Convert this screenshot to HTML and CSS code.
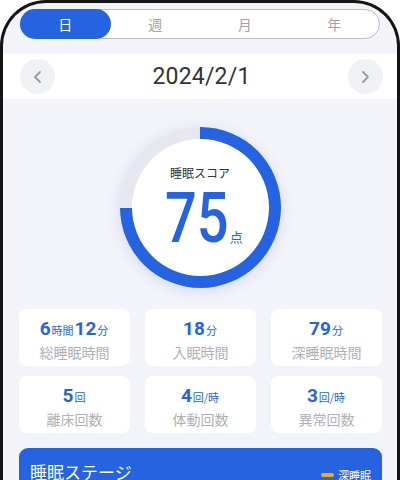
FILE: index.html
```html
<!DOCTYPE html>
<html lang="ja">
<head>
  <meta charset="UTF-8">
  <title>睡眠レポート</title>
  <link rel="stylesheet" href="styles.css">
</head>
<body>
  <div class="phone">
    <div class="tabs">
      <div class="tab active">日</div>
      <div class="tab">週</div>
      <div class="tab">月</div>
      <div class="tab">年</div>
    </div>

    <div class="datebar">
      <div class="nav">
        <svg width="14" height="14" viewBox="0 0 14 14"><polyline points="9,2 4,7 9,12" fill="none" stroke="#9b9ba1" stroke-width="1.8" stroke-linecap="round" stroke-linejoin="round"/></svg>
      </div>
      <div class="date">2024/2/1</div>
      <div class="nav">
        <svg width="14" height="14" viewBox="0 0 14 14"><polyline points="5,2 10,7 5,12" fill="none" stroke="#9b9ba1" stroke-width="1.8" stroke-linecap="round" stroke-linejoin="round"/></svg>
      </div>
    </div>

    <div class="score">
      <div class="ring">
        <div class="ring-inner">
          <div class="score-label">睡眠スコア</div>
          <div class="score-value"><span class="big">75</span><span class="pt">点</span></div>
        </div>
      </div>
    </div>

    <div class="stats">
      <div class="card">
        <div class="val">6<small>時間</small>12<small>分</small></div>
        <div class="lbl">総睡眠時間</div>
      </div>
      <div class="card">
        <div class="val">18<small>分</small></div>
        <div class="lbl">入眠時間</div>
      </div>
      <div class="card">
        <div class="val">79<small>分</small></div>
        <div class="lbl">深睡眠時間</div>
      </div>
      <div class="card">
        <div class="val">5<small>回</small></div>
        <div class="lbl">離床回数</div>
      </div>
      <div class="card">
        <div class="val">4<small>回/時</small></div>
        <div class="lbl">体動回数</div>
      </div>
      <div class="card">
        <div class="val">3<small>回/時</small></div>
        <div class="lbl">異常回数</div>
      </div>
    </div>

    <div class="stage">
      <div class="stage-title">睡眠ステージ</div>
      <div class="legend"><span class="dash"></span>深睡眠</div>
    </div>
  </div>
</body>
</html>
```

FILE: styles.css
```css
* {
  box-sizing: border-box;
}
body {
  margin: 0;
  background: #ffffff;
  font-family: "Noto Sans CJK JP", "Noto Sans", sans-serif;
  color: #333;
}
.phone {
  width: 400px;
  height: 480px;
  border: 3px solid #141414;
  border-bottom: none;
  border-radius: 46px 46px 0 0;
  background: #f3f4f9;
  overflow: hidden;
}
.tabs {
  display: grid;
  grid-template-columns: repeat(4, 1fr);
  margin: 6px 17px 15px;
  height: 30px;
  border: 1px solid #bcbcc2;
  border-radius: 16px;
  background: #fff;
}
.tab {
  display: flex;
  align-items: center;
  justify-content: center;
  font-size: 14px;
  color: #a0a0a6;
}
.tab.active {
  margin: -1px 0 -1px -1px;
  background: #2563e0;
  color: #fff;
  border-radius: 16px;
}
.datebar {
  display: flex;
  align-items: center;
  justify-content: space-between;
  height: 45px;
  padding: 0 14px 0 17px;
  background: #fff;
}
.nav {
  width: 35px;
  height: 35px;
  border-radius: 50%;
  background: #eff1f5;
  display: flex;
  align-items: center;
  justify-content: center;
}
.date {
  font-family: Roboto, "Liberation Sans", sans-serif;
  font-size: 23px;
  color: #333;
  letter-spacing: 0.2px;
}
.score {
  display: flex;
  justify-content: center;
  padding: 28px 0 21px;
}
.ring {
  width: 161px;
  height: 161px;
  padding: 12px;
  border-radius: 50%;
  background: conic-gradient(#2563e0 0 75%, #e6e7f1 75% 100%);
  box-shadow: 0 3px 14px rgba(70, 90, 170, 0.18);
}
.ring-inner {
  width: 100%;
  height: 100%;
  border-radius: 50%;
  background: #fff;
  display: flex;
  flex-direction: column;
  align-items: center;
  padding-top: 26px;
}
.score-label {
  font-size: 12px;
  line-height: 16px;
  color: #333;
}
.score-value {
  margin-top: 2px;
  margin-left: 8px;
  display: flex;
  align-items: baseline;
  color: #2563e0;
  font-family: Roboto, "Liberation Sans", sans-serif;
}
.big {
  display: inline-block;
  font-size: 70px;
  font-weight: 500;
  line-height: 1;
  transform: scaleX(0.8);
  margin: 0 -8px;
}
.pt {
  font-family: "Noto Sans CJK JP", sans-serif;
  font-size: 13px;
  margin-left: 1px;
}
.stats {
  display: grid;
  grid-template-columns: repeat(3, 1fr);
  gap: 10px 15px;
  margin: 0 15px 15px 16px;
}
.card {
  height: 57px;
  background: #fff;
  border-radius: 8px;
  display: flex;
  flex-direction: column;
  align-items: center;
  padding-top: 9px;
}
.val {
  font-family: Roboto, "Liberation Sans", sans-serif;
  font-weight: bold;
  font-size: 19px;
  line-height: 22px;
  color: #2563e0;
}
.val small {
  font-family: "Noto Sans CJK JP", sans-serif;
  font-weight: normal;
  font-size: 11px;
  margin: 0 1px;
}
.lbl {
  margin-top: 2px;
  font-size: 14px;
  line-height: 18px;
  color: #b0b0b6;
}
.stage {
  display: flex;
  justify-content: space-between;
  align-items: flex-start;
  margin: 0 15px 0 16px;
  padding: 12px 11px 0 11px;
  height: 60px;
  background: #2563e0;
  border-radius: 9px 9px 0 0;
  color: #fff;
}
.stage-title {
  font-size: 17px;
  line-height: 24px;
}
.legend {
  display: flex;
  align-items: center;
  font-size: 11px;
  line-height: 24px;
  margin-top: 3px;
}
.dash {
  width: 13px;
  height: 4px;
  border-radius: 2px;
  background: #f5a623;
  margin-right: 4px;
}
```
